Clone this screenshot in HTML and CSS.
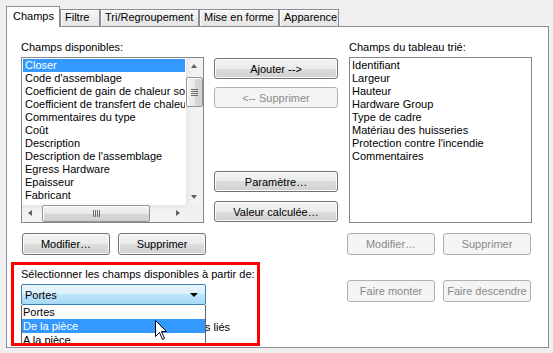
FILE: index.html
```html
<!DOCTYPE html>
<html lang="fr">
<head>
<meta charset="utf-8">
<title>Propriétés de nomenclature</title>
<link rel="stylesheet" href="styles.css">
</head>
<body>
<div class="dialog">
  <div class="tabbar">
    <div class="tab active t-champs">Champs</div>
    <div class="tab t-filtre">Filtre</div>
    <div class="tab t-tri">Tri/Regroupement</div>
    <div class="tab t-mise">Mise en forme</div>
    <div class="tab t-app">Apparence</div>
  </div>
  <div class="panel">
    <div class="col col-left">
      <div class="label">Champs disponibles:</div>
      <div class="listbox scrolled">
        <div class="items">
          <div class="item sel">Closer</div>
          <div class="item">Code d'assemblage</div>
          <div class="item">Coefficient de gain de chaleur solaire</div>
          <div class="item">Coefficient de transfert de chaleur (U)</div>
          <div class="item">Commentaires du type</div>
          <div class="item">Coût</div>
          <div class="item">Description</div>
          <div class="item">Description de l'assemblage</div>
          <div class="item">Egress Hardware</div>
          <div class="item">Epaisseur</div>
          <div class="item">Fabricant</div>
        </div>
        <div class="vscroll">
          <div class="arrow up"></div>
          <div class="vtrack"><div class="thumb vthumb"><span class="grip v"></span></div></div>
          <div class="arrow down"></div>
        </div>
        <div class="hscroll">
          <div class="arrow left"></div>
          <div class="htrack"><div class="thumb hthumb"><span class="grip h"></span></div></div>
          <div class="arrow right"></div>
        </div>
        <div class="corner"></div>
      </div>
      <div class="btnrow">
        <button class="btn w88">Modifier…</button>
        <button class="btn w88">Supprimer</button>
      </div>
      <div class="redbox">
        <div class="label">Sélectionner les champs disponibles à partir de:</div>
        <div class="combo"><span>Portes</span><span class="caret"></span></div>
        <div class="checkrow"><span class="check"></span><span>Inclure les éléments des fichiers liés</span></div>
        <div class="dropdown">
          <div class="ditem">Portes</div>
          <div class="ditem sel">De la pièce</div>
          <div class="ditem">A la pièce</div>
        </div>
        <svg class="cursor" width="13" height="21" viewBox="0 0 13 21">
          <path d="M0.5 0.5 L0.5 16.5 L4.5 12.5 L7.5 19.5 L9.5 18.5 L6.5 11.5 L11.5 11.5 Z" fill="#fff" stroke="#000" stroke-width="1"/>
        </svg>
      </div>
    </div>
    <div class="col col-mid">
      <button class="btn wide">Ajouter --&gt;</button>
      <button class="btn wide dis m-sup">&lt;-- Supprimer</button>
      <button class="btn wide m-param">Paramètre…</button>
      <button class="btn wide m-val">Valeur calculée…</button>
    </div>
    <div class="col col-right">
      <div class="label">Champs du tableau trié:</div>
      <div class="listbox plain">
        <div class="items">
          <div class="item">Identifiant</div>
          <div class="item">Largeur</div>
          <div class="item">Hauteur</div>
          <div class="item">Hardware Group</div>
          <div class="item">Type de cadre</div>
          <div class="item">Matériau des huisseries</div>
          <div class="item">Protection contre l'incendie</div>
          <div class="item">Commentaires</div>
        </div>
      </div>
      <div class="btnrow right">
        <button class="btn w88 dis">Modifier…</button>
        <button class="btn w88 dis">Supprimer</button>
      </div>
      <div class="btnrow right move">
        <button class="btn w88 dis">Faire monter</button>
        <button class="btn w88 dis">Faire descendre</button>
      </div>
    </div>
  </div>
</div>
</body>
</html>
```
FILE: styles.css
```css
* { box-sizing: border-box; }
html, body { margin: 0; padding: 0; }
body {
  background: #f0f0f0;
  font-family: "Liberation Sans", Arial, sans-serif;
  font-size: 11px;
  color: #000;
  width: 553px;
  height: 353px;
  overflow: hidden;
}
.dialog { padding: 6px 0 0 6px; }

/* tabs */
.tabbar {
  display: flex;
  align-items: flex-end;
  height: 20px;
}
.tab {
  height: 17px;
  line-height: 15px;
  padding: 0 0 0 4px;
  border: 1px solid #898c95;
  border-bottom: none;
  background: linear-gradient(#f5f5f5, #e4e4e4);
  box-shadow: inset 1px 1px 0 #fff;
  white-space: nowrap;
}
.tab.active {
  height: 21px;
  line-height: 19px;
  margin-bottom: -1px;
  background: #fff;
  box-shadow: none;
  position: relative;
  z-index: 1;
  padding-left: 6px;
}
.t-champs { width: 54px; }
.t-filtre { width: 40px; }
.t-tri { width: 99px; }
.t-mise { width: 80px; }
.t-app { width: 60px; }

.panel {
  width: 543px;
  height: 322px;
  border: 1px solid #898c95;
  background: #fff;
  padding: 14px 0 0 14px;
  display: flex;
}
.col { display: flex; flex-direction: column; }
.col-left { width: 183px; }
.col-mid { width: 124px; margin-left: 10px; padding-top: 17px; }
.col-right { width: 183px; margin-left: 11px; }

.label { height: 13px; line-height: 13px; margin-bottom: 3px; white-space: nowrap; }

/* listboxes */
.listbox {
  height: 166px;
  border: 1px solid #828790;
  background: #fff;
}
.listbox.scrolled {
  display: grid;
  grid-template-columns: 1fr 17px;
  grid-template-rows: 1fr 17px;
}
.items { padding: 1px; overflow: hidden; }
.item {
  height: 13px;
  line-height: 13px;
  padding-left: 2px;
  white-space: nowrap;
  overflow: hidden;
}
.item.sel { background: #3399ff; color: #fff; }

.vscroll, .hscroll {
  background: linear-gradient(90deg, #e7e7e7, #f3f3f3 40%, #f3f3f3);
  display: flex;
}
.vscroll { flex-direction: column; }
.hscroll { background: linear-gradient(#e7e7e7, #f3f3f3 40%, #f3f3f3); }
.corner { background: #f0f0f0; }
.arrow { width: 17px; height: 17px; flex: none; position: relative; }
.arrow::after {
  content: "";
  position: absolute;
  width: 0; height: 0;
  border: 3px solid transparent;
}
.arrow.up::after { left: 5px; top: 6px; border-width: 0 3.5px 4px; border-bottom-color: #606060; }
.arrow.down::after { left: 5px; top: 7px; border-width: 4px 3.5px 0; border-top-color: #606060; }
.arrow.left::after { left: 6px; top: 5px; border-width: 3.5px 4px 3.5px 0; border-right-color: #606060; }
.arrow.right::after { left: 7px; top: 5px; border-width: 3.5px 0 3.5px 4px; border-left-color: #606060; }
.vtrack { flex: 1; padding: 2px 0 0 0; }
.htrack { flex: 1; padding: 0 0 0 3px; display: flex; }
.thumb {
  border: 1px solid #959595;
  border-radius: 2px;
  display: flex;
  align-items: center;
  justify-content: center;
}
.vthumb {
  width: 17px;
  height: 30px;
  background: linear-gradient(90deg, #f4f4f4, #e8e8e8 50%, #d8d8d8 51%, #d0d0d0);
  box-shadow: inset 1px 1px 0 #fff;
}
.hthumb {
  width: 108px;
  height: 17px;
  background: linear-gradient(#f4f4f4, #e8e8e8 50%, #d8d8d8 51%, #d0d0d0);
  box-shadow: inset 1px 1px 0 #fff;
}
.grip.v {
  width: 7px; height: 7px;
  background: repeating-linear-gradient(#6e6e6e 0 1px, transparent 1px 2px);
}
.grip.h {
  width: 7px; height: 7px;
  background: repeating-linear-gradient(90deg, #6e6e6e 0 1px, transparent 1px 2px);
}

.plain .items { padding: 1px 1px 1px 0; }

/* buttons */
.btn {
  font-family: inherit;
  font-size: 11px;
  color: #000;
  height: 22px;
  padding: 0;
  border: 1px solid #707070;
  border-radius: 3px;
  background: linear-gradient(#f2f2f2 0%, #ebebeb 50%, #dddddd 50%, #cfcfcf 100%);
  box-shadow: inset 0 0 0 1px #fcfcfc;
  white-space: nowrap;
}
.btn.dis {
  color: #8a8a8a;
  border-color: #adb2b5;
  background: #f4f4f4;
  box-shadow: none;
}
.w88 { width: 88px; flex: none; }
.wide { width: 124px; height: 21px; }
.m-sup { margin-top: 8px; }
.m-param { margin-top: 63px; }
.m-val { margin-top: 9px; }

.btnrow { display: flex; gap: 8px; margin-top: 10px; margin-left: 1px; }
.btnrow.right { margin-left: -2px; gap: 8px; }
.btnrow.move { margin-top: 25px; }

/* red annotation box */
.redbox {
  position: relative;
  margin-top: 7px;
  margin-left: -10px;
  width: 249px;
  height: 84px;
  border: 3px solid #ff0000;
  padding: 3px 0 0 7px;
  overflow: hidden;
}
.combo {
  width: 185px;
  height: 21px;
  border: 1px solid #3c7fb1;
  border-radius: 2px;
  background: linear-gradient(#eaf6fd 0%, #d9f0fc 50%, #bee6fd 50%, #a7d9f5 100%);
  display: flex;
  align-items: center;
  justify-content: space-between;
  padding: 0 7px 0 3px;
}
.caret {
  width: 0; height: 0;
  border-left: 4px solid transparent;
  border-right: 4px solid transparent;
  border-top: 4px solid #000;
}
.checkrow {
  display: flex;
  align-items: center;
  gap: 4px;
  margin-top: 16px;
  padding-left: 16px;
  height: 13px;
  line-height: 13px;
  white-space: nowrap;
}
.check { width: 13px; height: 13px; border: 1px solid #8f8f8f; background: #f4f4f4; flex: none; }
.dropdown {
  position: absolute;
  left: 7px;
  top: 40px;
  width: 185px;
  height: 60px;
  background: #fff;
  border: 1px solid #646464;
  border-top: none;
}
.ditem { height: 14px; line-height: 14px; padding-left: 1px; white-space: nowrap; }
.ditem.sel { background: #3399ff; color: #fff; }
.cursor { position: absolute; left: 141px; top: 55px; }
```
